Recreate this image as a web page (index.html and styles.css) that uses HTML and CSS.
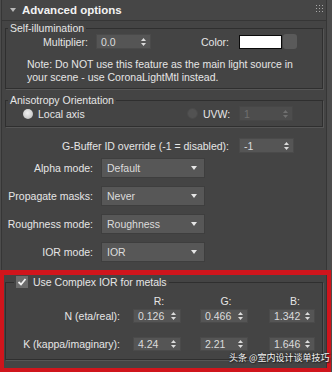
FILE: index.html
```html
<!DOCTYPE html>
<html>
<head>
<meta charset="utf-8">
<link rel="stylesheet" href="styles.css">
</head>
<body>
<div class="panel">
  <div class="header">
    <svg class="tri" width="6" height="4" viewBox="0 0 6 4"><polygon points="0,0 6,0 3,4" fill="#b8b8b8"/></svg>
    <span class="title">Advanced options</span>
    <svg class="grip" width="7" height="7" viewBox="0 0 7 7" fill="#a8a8a8"><rect x="0" y="0" width="1" height="1"/><rect x="3" y="0" width="1" height="1"/><rect x="6" y="0" width="1" height="1"/><rect x="0" y="3" width="1" height="1"/><rect x="3" y="3" width="1" height="1"/><rect x="6" y="3" width="1" height="1"/><rect x="0" y="6" width="1" height="1"/><rect x="3" y="6" width="1" height="1"/><rect x="6" y="6" width="1" height="1"/></svg>
  </div>

  <fieldset class="group g-self">
    <legend>Self-illumination</legend>
    <div class="row">
      <span class="lbl lbl-mult">Multiplier:</span>
      <div class="spin s-mult"><span>0.0</span><svg class="arr" width="5" height="8" viewBox="0 0 5 8"><polygon points="2.5,0 5,3 0,3"/><polygon points="0,5 5,5 2.5,8"/></svg></div>
      <span class="lbl lbl-color">Color:</span>
      <div class="swatch"></div>
      <div class="swatch-btn"></div>
    </div>
    <p class="note">Note: Do NOT use this feature as the main light source in<br>your scene - use CoronaLightMtl instead.</p>
  </fieldset>

  <fieldset class="group g-aniso">
    <legend>Anisotropy Orientation</legend>
    <div class="row">
      <div class="opt1"><span class="radio on"></span><span class="rtext">Local axis</span></div>
      <span class="radio off"></span>
      <span class="uvw-lbl">UVW:</span>
      <div class="spin s-uvw disabled"><span>1</span><svg class="arr" width="5" height="8" viewBox="0 0 5 8"><polygon points="2.5,0 5,3 0,3"/><polygon points="0,5 5,5 2.5,8"/></svg></div>
    </div>
  </fieldset>

  <div class="gbuf">
    <span class="lbl gbuf-lbl">G-Buffer ID override (-1 = disabled):</span>
    <div class="spin s-gbuf"><span>-1</span><svg class="arr" width="5" height="8" viewBox="0 0 5 8"><polygon points="2.5,0 5,3 0,3"/><polygon points="0,5 5,5 2.5,8"/></svg></div>
  </div>

  <div class="form">
    <span class="lbl">Alpha mode:</span>
    <div class="drop"><span>Default</span><span class="darr"></span></div>
    <span class="lbl">Propagate masks:</span>
    <div class="drop"><span>Never</span><span class="darr"></span></div>
    <span class="lbl">Roughness mode:</span>
    <div class="drop"><span>Roughness</span><span class="darr"></span></div>
    <span class="lbl">IOR mode:</span>
    <div class="drop"><span>IOR</span><span class="darr"></span></div>
  </div>

  <fieldset class="group g-complex">
    <legend class="chk-legend">
      <span class="check"><svg width="10" height="10" viewBox="0 0 10 10"><polyline points="1.5,5 4,7.5 8.5,2" fill="none" stroke="#f2f2f2" stroke-width="1.8"/></svg></span>
      <span class="chk-text">Use Complex IOR for metals</span>
    </legend>
    <div class="cgrid hdr">
      <span></span>
      <span class="ch">R:</span>
      <span class="ch">G:</span>
      <span class="ch">B:</span>
    </div>
    <div class="cgrid vrow">
      <span class="lbl clbl">N (eta/real):</span>
      <div class="spin cs"><span>0.126</span><svg class="arr" width="5" height="8" viewBox="0 0 5 8"><polygon points="2.5,0 5,3 0,3"/><polygon points="0,5 5,5 2.5,8"/></svg></div>
      <div class="spin cs"><span>0.466</span><svg class="arr" width="5" height="8" viewBox="0 0 5 8"><polygon points="2.5,0 5,3 0,3"/><polygon points="0,5 5,5 2.5,8"/></svg></div>
      <div class="spin cs cs-b"><span>1.342</span><svg class="arr" width="5" height="8" viewBox="0 0 5 8"><polygon points="2.5,0 5,3 0,3"/><polygon points="0,5 5,5 2.5,8"/></svg></div>
    </div>
    <div class="cgrid vrow vrow-k">
      <span class="lbl clbl">K (kappa/imaginary):</span>
      <div class="spin cs"><span>4.24</span><svg class="arr" width="5" height="8" viewBox="0 0 5 8"><polygon points="2.5,0 5,3 0,3"/><polygon points="0,5 5,5 2.5,8"/></svg></div>
      <div class="spin cs"><span>2.21</span><svg class="arr" width="5" height="8" viewBox="0 0 5 8"><polygon points="2.5,0 5,3 0,3"/><polygon points="0,5 5,5 2.5,8"/></svg></div>
      <div class="spin cs cs-b"><span>1.646</span><svg class="arr" width="5" height="8" viewBox="0 0 5 8"><polygon points="2.5,0 5,3 0,3"/><polygon points="0,5 5,5 2.5,8"/></svg></div>
    </div>
  </fieldset>
</div>

<div class="highlight"></div>
<div class="watermark">头条 @室内设计谈单技巧</div>
</body>
</html>
```

FILE: styles.css
```css
html, body {
  margin: 0;
  padding: 0;
}
body {
  width: 332px;
  height: 372px;
  overflow: hidden;
  position: relative;
  background: #4c4c4c;
  font-family: "Liberation Sans", Arial, sans-serif;
  font-size: 10.5px;
  color: #e6e6e6;
}
.panel {
  margin-left: 1px;
  width: 326px;
  height: 372px;
  box-sizing: border-box;
  background: #444444;
  border-left: 1px solid #363636;
  border-right: 1px solid #363636;
}
.header {
  height: 21px;
  box-sizing: border-box;
  border-bottom: 1px solid #363636;
  display: flex;
  align-items: center;
  padding-left: 8px;
  background: #464646;
}
.tri { display: block; }
.title {
  margin-left: 6px;
  font-weight: bold;
  font-size: 11.5px;
  color: #f2f2f2;
}
.grip {
  margin-left: auto;
  margin-right: 3px;
  margin-top: -3px;
}

.group {
  margin: 1px 3px 0 3px;
  padding: 0 0 4px 0;
  border: 1px solid #2f2f2f;
  box-shadow: 1px 1px 0 #565656;
  min-width: 0;
}
.group legend {
  padding: 0 2px;
  margin-left: 2px;
  line-height: 12px;
  height: 12px;
  background: #444444;
}
.row {
  display: flex;
  align-items: center;
  height: 15px;
}
.lbl { white-space: nowrap; }
.lbl-mult { width: 82px; text-align: right; }
.lbl-color { width: 78px; text-align: right; }

.spin {
  box-sizing: border-box;
  height: 15px;
  background: #555555;
  border: 1px solid #4a4a4a;
  display: flex;
  align-items: center;
  justify-content: space-between;
  padding: 0 4px 0 4px;
  color: #dcdcdc;
}
.spin .arr { fill: #dcdcdc; display: block; }
.s-mult { margin-left: 8px; width: 55px; }
.swatch {
  margin-left: 10px;
  width: 43px;
  height: 14px;
  box-sizing: border-box;
  background: #ffffff;
  border: 1px solid #0a0a0a;
}
.swatch-btn {
  margin-left: 1px;
  width: 14px;
  height: 15px;
  background: #5a5a5a;
  border-radius: 3px;
}
.note {
  margin: 9px 0 0 21px;
  line-height: 13px;
}

.g-aniso { margin-top: 5px; padding-bottom: 5px; }
.g-aniso .row { padding-left: 17px; }
.opt1 {
  width: 164px;
  display: flex;
  align-items: center;
}
.radio {
  width: 10px;
  height: 10px;
  border-radius: 50%;
  display: block;
  flex: none;
}
.radio.on { background: radial-gradient(circle at 45% 40%, #f0f0f0 0%, #d2d2d2 55%, #a8a8a8 100%); }
.radio.off { background: #525252; border: 1px solid #4a4a4a; box-sizing: border-box; width: 11px; height: 11px; }
.rtext { margin-left: 5px; }
.uvw-lbl { margin-left: 5px; width: 36px; }
.s-uvw { width: 54px; }
.spin.disabled { background: #4d4d4d; color: #707070; border-color: #474747; }
.spin.disabled .arr { fill: #707070; }

.gbuf {
  margin-top: 11px;
  display: flex;
  align-items: center;
  height: 15px;
}
.gbuf-lbl { width: 227px; text-align: right; }
.s-gbuf { margin-left: 10px; width: 55px; }

.form {
  margin-top: 5px;
  display: grid;
  grid-template-columns: 91px 104px;
  grid-auto-rows: 20px;
  column-gap: 8px;
  row-gap: 8px;
  align-items: center;
}
.form .lbl { text-align: right; }
.drop {
  box-sizing: border-box;
  height: 20px;
  background: #575757;
  border: 1px solid #3e3e3e;
  display: flex;
  align-items: center;
  justify-content: space-between;
  padding: 0 7px 0 5px;
  color: #dcdcdc;
}
.darr {
  width: 0;
  height: 0;
  border-left: 3px solid transparent;
  border-right: 3px solid transparent;
  border-top: 4px solid #e6e6e6;
}

.g-complex { margin-top: 13px; padding-bottom: 8px; }
.g-complex legend.chk-legend {
  margin-left: 8px;
  height: 14px;
  line-height: 14px;
  display: flex;
  align-items: center;
}
.check {
  width: 12px;
  height: 12px;
  background: #6c6c6c;
  display: flex;
  align-items: center;
  justify-content: center;
}
.check svg { display: block; }
.chk-text { margin-left: 5px; }

.cgrid {
  display: grid;
  grid-template-columns: 127px 67px 69px 48px;
  align-items: center;
}
.hdr { margin-top: 5px; height: 13px; }
.ch { width: 48px; padding-left: 4px; box-sizing: border-box; text-align: center; }
.vrow { margin-top: 2px; height: 14px; }
.vrow-k { margin-top: 14px; }
.clbl { text-align: right; padding-right: 13px; }
.cs { width: 48px; height: 14px; }
.cs-b { width: 46px; }

.highlight {
  position: absolute;
  left: 0;
  top: 270px;
  width: 331px;
  height: 102px;
  box-sizing: border-box;
  border: 4px solid #d0151c;
  border-top-width: 5px;
}
.watermark {
  position: absolute;
  left: 229px;
  top: 352px;
  font-family: "Noto Sans CJK SC", sans-serif;
  font-size: 9px;
  line-height: 12px;
  color: #f4f4f4;
  white-space: nowrap;
  text-shadow: 0 0 2px #222, 1px 1px 1px #222;
}
```
